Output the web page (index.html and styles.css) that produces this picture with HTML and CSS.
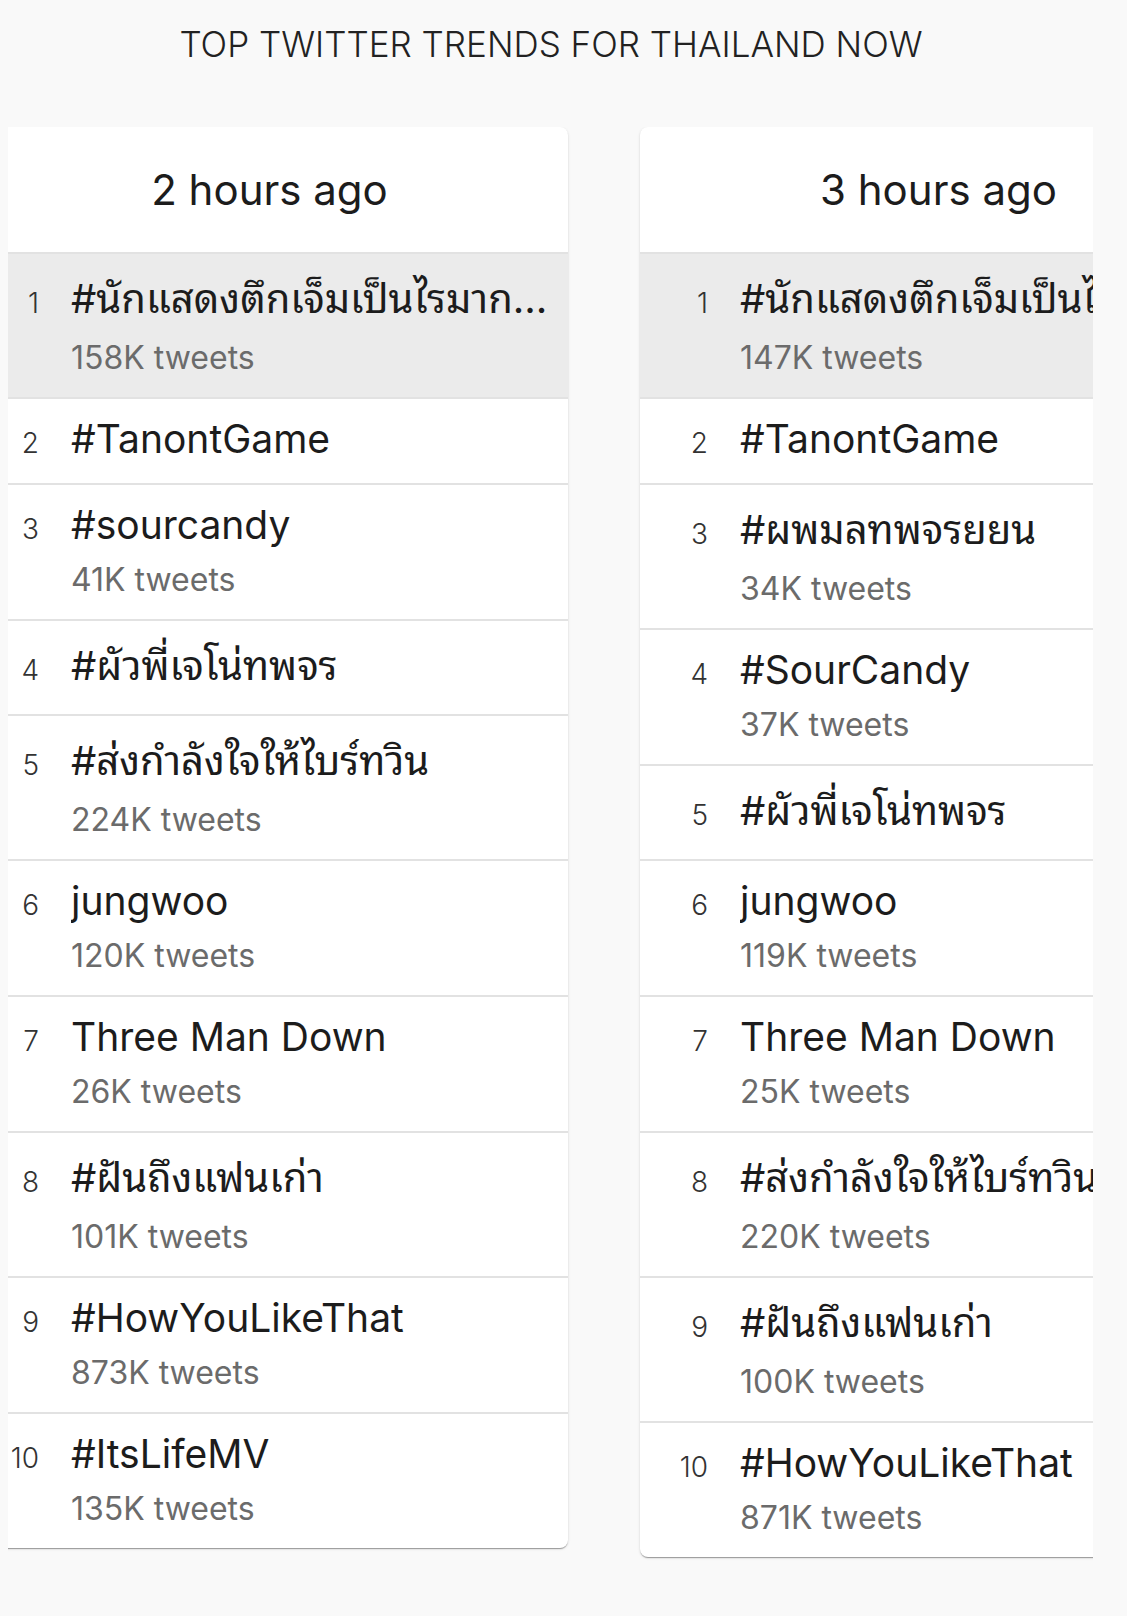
FILE: index.html
```html
<!DOCTYPE html>
<html lang="th">
<head>
<meta charset="utf-8">
<title>Top Twitter Trends for Thailand Now</title>
<link rel="stylesheet" href="styles.css">
</head>
<body>
<h1 class="page-title">TOP TWITTER TRENDS FOR THAILAND NOW</h1>
<div class="scroller">
  <div class="track">
    <section class="card">
      <header class="card-head">2 hours ago</header>
      <ol class="list">
        <li class="row active"><span class="rank">1</span><div class="info"><div class="name thai">#นักแสดงตึกเจ็มเป็นไรมากไหมคะ</div><div class="count">158K tweets</div></div></li>
        <li class="row"><span class="rank">2</span><div class="info"><div class="name">#TanontGame</div></div></li>
        <li class="row"><span class="rank">3</span><div class="info"><div class="name">#sourcandy</div><div class="count">41K tweets</div></div></li>
        <li class="row"><span class="rank">4</span><div class="info"><div class="name thai">#ผัวพี่เจโน่ทพจร</div></div></li>
        <li class="row"><span class="rank">5</span><div class="info"><div class="name thai">#ส่งกำลังใจให้ไบร์ทวิน</div><div class="count">224K tweets</div></div></li>
        <li class="row"><span class="rank">6</span><div class="info"><div class="name">jungwoo</div><div class="count">120K tweets</div></div></li>
        <li class="row"><span class="rank">7</span><div class="info"><div class="name">Three Man Down</div><div class="count">26K tweets</div></div></li>
        <li class="row"><span class="rank">8</span><div class="info"><div class="name thai">#ฝันถึงแฟนเก่า</div><div class="count">101K tweets</div></div></li>
        <li class="row"><span class="rank">9</span><div class="info"><div class="name">#HowYouLikeThat</div><div class="count">873K tweets</div></div></li>
        <li class="row"><span class="rank">10</span><div class="info"><div class="name">#ItsLifeMV</div><div class="count">135K tweets</div></div></li>
      </ol>
    </section>
    <section class="card">
      <header class="card-head">3 hours ago</header>
      <ol class="list">
        <li class="row active"><span class="rank">1</span><div class="info"><div class="name thai">#นักแสดงตึกเจ็มเป็นไรมากไหมคะ</div><div class="count">147K tweets</div></div></li>
        <li class="row"><span class="rank">2</span><div class="info"><div class="name">#TanontGame</div></div></li>
        <li class="row"><span class="rank">3</span><div class="info"><div class="name thai">#ผพมลทพจรยยน</div><div class="count">34K tweets</div></div></li>
        <li class="row"><span class="rank">4</span><div class="info"><div class="name">#SourCandy</div><div class="count">37K tweets</div></div></li>
        <li class="row"><span class="rank">5</span><div class="info"><div class="name thai">#ผัวพี่เจโน่ทพจร</div></div></li>
        <li class="row"><span class="rank">6</span><div class="info"><div class="name">jungwoo</div><div class="count">119K tweets</div></div></li>
        <li class="row"><span class="rank">7</span><div class="info"><div class="name">Three Man Down</div><div class="count">25K tweets</div></div></li>
        <li class="row"><span class="rank">8</span><div class="info"><div class="name thai">#ส่งกำลังใจให้ไบร์ทวิน</div><div class="count">220K tweets</div></div></li>
        <li class="row"><span class="rank">9</span><div class="info"><div class="name thai">#ฝันถึงแฟนเก่า</div><div class="count">100K tweets</div></div></li>
        <li class="row"><span class="rank">10</span><div class="info"><div class="name">#HowYouLikeThat</div><div class="count">871K tweets</div></div></li>
      </ol>
    </section>
  </div>
</div>
</body>
</html>
```
FILE: styles.css
```css
html, body {
  margin: 0;
  padding: 0;
}
body {
  background: #f9f9f9;
  font-family: "Inter", "Noto Sans Thai Looped", "Thonburi", "Loma", "Garuda", "Waree", "Umpush", "Sawasdee", "Noto Sans Thai", "Noto Sans", sans-serif;
  color: #1c1c1c;
  width: 1127px;
  height: 1616px;
  overflow: hidden;
}
.page-title {
  margin: 24px 0 0;
  padding-right: 25px;
  font-size: 35px;
  line-height: 40px;
  font-weight: 300;
  text-align: center;
  color: #222;
}
.scroller {
  margin: 63px 0 0 8px;
  width: 1085px;
  overflow: hidden;
  padding-bottom: 40px;
}
.track {
  display: flex;
  gap: 72px;
  margin-left: -37px;
  align-items: flex-start;
}
.card {
  flex: 0 0 597px;
  width: 597px;
  background: #fff;
  border-radius: 8px;
  overflow: hidden;
  box-shadow: 0 2px 1px -1px rgba(0,0,0,.22), 0 1px 1px 0 rgba(0,0,0,.14), 0 1px 3px 0 rgba(0,0,0,.12);
}
.card-head {
  height: 125px;
  display: flex;
  align-items: center;
  justify-content: center;
  font-size: 42px;
  font-weight: 400;
  color: #1c1c1c;
}
.list {
  list-style: none;
  margin: 0;
  padding: 0;
}
.row {
  display: flex;
  align-items: baseline;
  gap: 32px;
  border-top: 2px solid #e2e2e2;
  padding: 15px 0 19px;
}
.row.active {
  background: #ebebeb;
}
.rank {
  flex: 0 0 68px;
  text-align: right;
  font-size: 28px;
  font-weight: 300;
  color: #333;
}
.info {
  flex: 1;
  min-width: 0;
  padding-right: 20px;
}
.name {
  font-size: 39px;
  line-height: 50px;
  white-space: nowrap;
  overflow: hidden;
  text-overflow: ellipsis;
  color: #1c1c1c;
}
.name.thai {
  font-size: 40px;
  line-height: 59px;
}
.count {
  margin-top: 10px;
  font-size: 32px;
  line-height: 40px;
  color: #6b6b6b;
}
```
